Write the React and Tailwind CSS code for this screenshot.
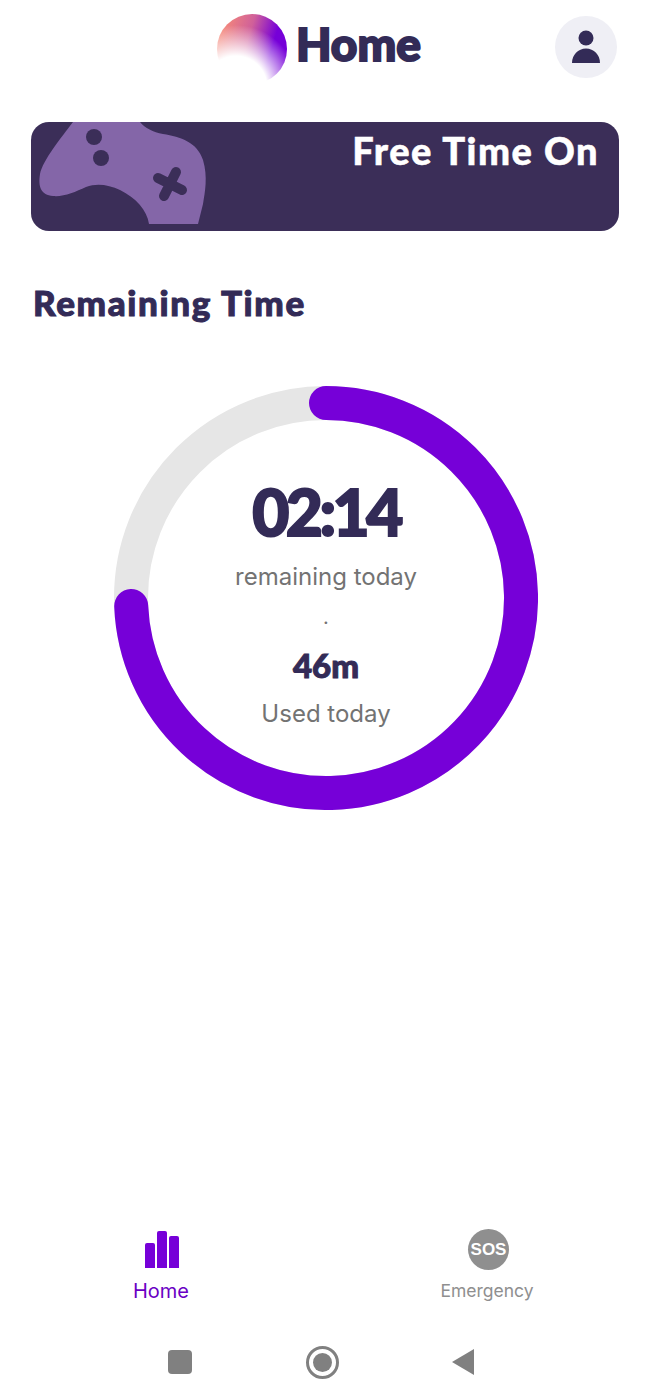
const HEADING = "font-['Lato',sans-serif] font-black text-[#332b57] [-webkit-text-stroke:1px_#332b57]"
const BODY = "font-['Inter',sans-serif] text-[#737373]"

const Logo = () => (
  <svg width="72" height="72" viewBox="0 0 72 72">
    <defs>
      <linearGradient id="logoFill" x1="0" y1="0.2" x2="1" y2="0.5">
        <stop offset="0" stopColor="#fb8f74" />
        <stop offset="0.45" stopColor="#d0609a" />
        <stop offset="0.8" stopColor="#7600d8" />
      </linearGradient>
      <radialGradient id="logoFade">
        <stop offset="0.5" stopColor="#ffffff" />
        <stop offset="1" stopColor="#ffffff" stopOpacity="0" />
      </radialGradient>
    </defs>
    <circle cx="36" cy="37" r="35" fill="url(#logoFill)" />
    <circle cx="20" cy="75" r="62" fill="url(#logoFade)" />
  </svg>
)

const Gamepad = () => (
  <svg className="absolute left-0 top-0" width="180" height="104" viewBox="0 0 180 104">
    <path
      d="M42 0 L109 0 C114 6 122 10 132 12 C150 15 166 20 172 38 C177 55 174 70 172 82 L167 102 L118 102 C116 88 105 76 89 68 C78 63 66 61 55 65 C44 70 33 75 22 74 C10 73 7 65 9 52 C12 38 30 16 42 0 Z"
      fill="#8466a8"
    />
    <circle cx="63" cy="15" r="8" fill="#3b2e58" />
    <circle cx="70" cy="36" r="8" fill="#3b2e58" />
    <path d="M127 56 L151 68 M145 50 L133 74" stroke="#3b2e58" strokeWidth="10" strokeLinecap="round" />
  </svg>
)

const Ring = () => (
  <svg width="424" height="424" viewBox="0 0 424 424" className="[grid-area:1/1]">
    <circle cx="212" cy="212" r="195" fill="none" stroke="#e6e6e6" strokeWidth="34" />
    <path
      d="M212 17 A195 195 0 1 1 17.2 220"
      fill="none"
      stroke="#7600d8"
      strokeWidth="34"
      strokeLinecap="round"
    />
  </svg>
)

const App = () => {
  return (
    <div className="w-[650px] h-[1397px] bg-white flex flex-col overflow-hidden">
      {/* Header */}
      <div className="h-[94px] pt-[12px] pl-[216px] pr-[33px] flex items-start">
        <Logo />
        <h1 className={`${HEADING} ml-[8px] mt-[2px] text-[46px] leading-[60px] [-webkit-text-stroke:2px_#332b57]`}>Home</h1>
        <div className="ml-auto mt-[4px] w-[62px] h-[62px] rounded-full bg-[#efeff5] flex items-center justify-center">
          <svg width="30" height="34" viewBox="0 0 30 34" fill="#332b57">
            <circle cx="15" cy="8" r="7.5" />
            <path d="M1 33 C1 25 7 18.5 15 18.5 C23 18.5 29 25 29 33 Z" />
          </svg>
        </div>
      </div>

      {/* Free time banner */}
      <div className="relative mt-[28px] mx-[31px] h-[109px] rounded-[18px] bg-[#3b2e58] overflow-hidden flex justify-end items-start pr-[20px] pt-[4px]">
        <Gamepad />
        <span className="relative font-['Lato',sans-serif] font-black text-white text-[38px] leading-[48px] tracking-[1.5px] [-webkit-text-stroke:0.5px_#ffffff]">Free Time On</span>
      </div>

      <h2 className={`${HEADING} mt-[48px] ml-[33px] text-[35px] leading-[46px] tracking-[1.65px]`}>Remaining Time</h2>

      {/* Remaining time ring */}
      <div className="mt-[61px] ml-[114px] w-[424px] grid">
        <Ring />
        <div className="[grid-area:1/1] flex flex-col items-center pt-[88px]">
          <div className={`${HEADING} text-[64px] leading-[76px] tracking-[-3.5px] [-webkit-text-stroke:2px_#332b57]`}>02:14</div>
          <div className={`${BODY} mt-[13px] text-[24px] leading-[28px]`}>remaining today</div>
          <div className={`${BODY} mt-[12px] text-[20px] leading-[28px]`}>.</div>
          <div className={`${HEADING} mt-[13px] text-[33px] leading-[42px]`}>46m</div>
          <div className={`${BODY} mt-[14px] text-[24px] leading-[28px]`}>Used today</div>
        </div>
      </div>

      {/* Tabs */}
      <div className="mt-auto flex ml-[-2px]">
        <div className="w-[327px] flex flex-col items-center">
          <svg width="36" height="38" viewBox="0 0 36 38" fill="#7600d8" className="ml-[2px]">
            <path d="M1 14 Q1 12 3 12 L9 12 Q11 12 11 14 L11 37 L1 37 Z" />
            <path d="M13 2 Q13 0 15 0 L21 0 Q23 0 23 2 L23 37 L13 37 Z" />
            <path d="M25 7 Q25 5 27 5 L33 5 Q35 5 35 7 L35 37 L25 37 Z" />
          </svg>
          <span className="mt-[10px] font-['Inter',sans-serif] text-[20px] leading-[24px] text-[#6a00c4]">Home</span>
        </div>
        <div className="w-[327px] flex flex-col items-center">
          <div className="w-[41px] h-[41px] mt-[-2px] ml-[3px] rounded-full bg-[#8f8f8f] flex items-center justify-center">
            <span className="font-['Liberation_Sans',sans-serif] font-bold text-white text-[17px]">SOS</span>
          </div>
          <span className="mt-[9px] font-['Inter',sans-serif] text-[17.5px] leading-[24px] text-[#8f8f8f]">Emergency</span>
        </div>
      </div>

      {/* Android nav bar */}
      <div className="mt-[43px] mb-[19px] h-[32px] flex items-center pl-[168px]">
        <div className="w-[24px] h-[24px] rounded-[4px] bg-[#808080]" />
        <div className="ml-[114px] w-[33px] h-[33px] rounded-full border-[3px] border-[#808080] flex items-center justify-center">
          <div className="w-[19px] h-[19px] rounded-full bg-[#808080]" />
        </div>
        <svg className="ml-[112px]" width="24" height="28" viewBox="0 0 24 28" fill="#808080">
          <path d="M23 1 L23 27 L1 14 Z" />
        </svg>
      </div>
    </div>
  )
}

export default App
